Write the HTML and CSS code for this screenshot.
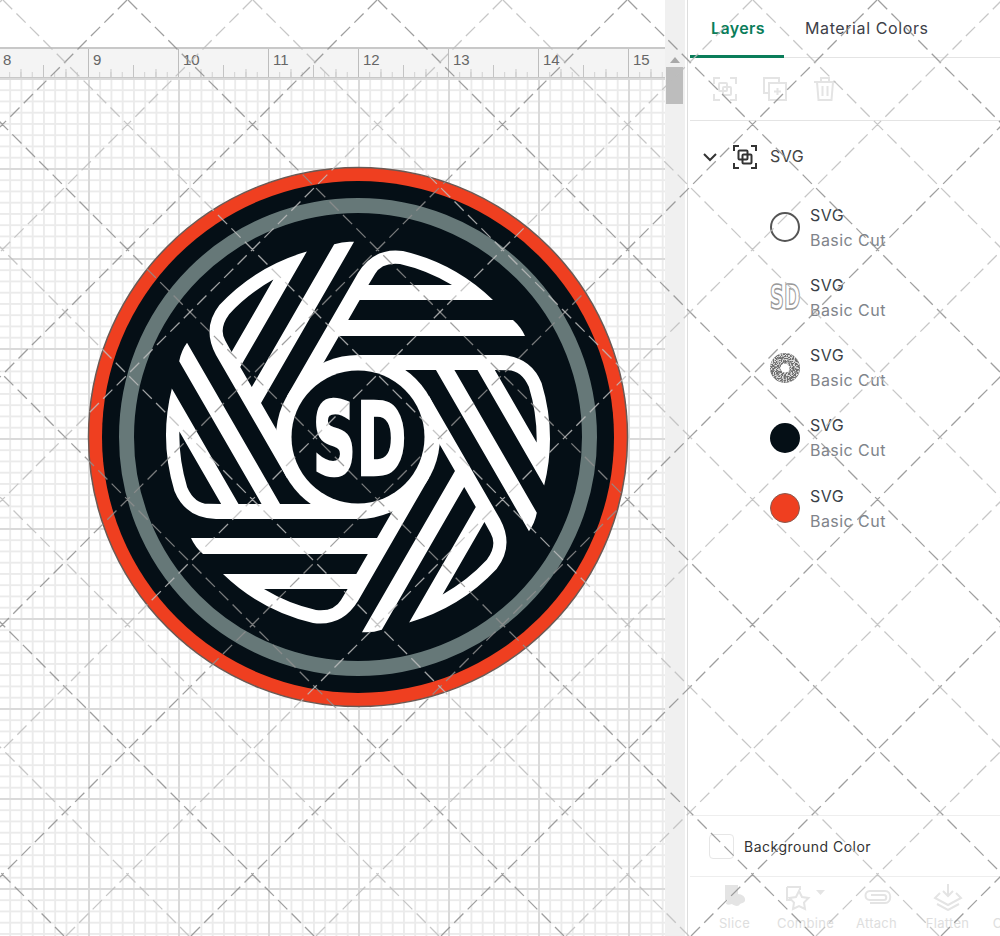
FILE: index.html
```html
<!DOCTYPE html>
<html lang="en">
<head>
<meta charset="utf-8">
<title>Layers</title>
<link rel="stylesheet" href="styles.css">
</head>
<body>
<svg width="0" height="0" class="defs">
  <defs>
    <g id="blade">
      <path fill-rule="evenodd" d="M-71,-41 L0,-164 Q16,-190 45,-186 A192,192 0 0 1 135,-137 L1.7,-137 L-9.8,-117 L155,-117 Q163,-110 167,-101 L-19,-101 L-30,-82 L-58,-33.5 Z M10.4,-152 L17,-163 Q24,-175 42,-173 A177,177 0 0 1 94,-152 Z"/>
    </g>
    <g id="blades" class="blades">
      <use href="#blade"/>
      <use href="#blade" transform="rotate(60)"/>
      <use href="#blade" transform="rotate(120)"/>
      <use href="#blade" transform="rotate(180)"/>
      <use href="#blade" transform="rotate(240)"/>
      <use href="#blade" transform="rotate(300)"/>
    </g>
    <filter id="speckle" x="0" y="0" width="100%" height="100%">
      <feTurbulence type="fractalNoise" baseFrequency="0.9" numOctaves="2" seed="4"/>
      <feColorMatrix type="matrix" values="0 0 0 0 0.72  0 0 0 0 0.72  0 0 0 0 0.72  7 0 0 0 -3.2"/>
      <feComposite in2="SourceGraphic" operator="in"/>
    </filter>
  </defs>
</svg>
<div class="app">
  <main class="work">
    <div class="topbar"></div>
    <div class="ruler">
      <div class="ruler-cell">8</div>
      <div class="ruler-cell">9</div>
      <div class="ruler-cell">10</div>
      <div class="ruler-cell">11</div>
      <div class="ruler-cell">12</div>
      <div class="ruler-cell">13</div>
      <div class="ruler-cell">14</div>
      <div class="ruler-cell">15</div>
    </div>
    <div class="canvas">
      <svg class="logo" width="544" height="544" viewBox="-272 -272 544 544">
        <circle r="269.5" class="logo-red"/>
        <circle r="256" class="logo-dark"/>
        <circle r="231.5" class="logo-ring"/>
        <use href="#blades" class="logo-white"/>
        <circle r="82" class="logo-white"/>
        <circle r="66.5" class="logo-dark"/>
        <text class="logo-sd" transform="translate(1.5,37.500) scale(0.6,1)" text-anchor="middle">SD</text>
      </svg>
    </div>
  </main>
  <div class="scrollbar">
    <div class="scroll-arrow"></div>
    <div class="scroll-thumb"></div>
  </div>
  <aside class="panel">
    <nav class="tabs">
      <div class="tab tab-active">Layers</div>
      <div class="tab">Material Colors</div>
    </nav>
    <div class="tools">
      <svg class="tool" width="26" height="26" viewBox="0 0 26 26"><path d="M2 8V2h6M18 2h6v6M24 18v6h-6M8 24H2v-6"/><rect x="7" y="7" width="8" height="8" rx="1"/><rect x="11" y="11" width="8" height="8" rx="1"/></svg>
      <svg class="tool" width="26" height="26" viewBox="0 0 26 26"><path d="M17 7V2H2v15h5"/><rect x="7" y="7" width="17" height="17"/><path d="M15.500 12v7M12 15.500h7"/></svg>
      <svg class="tool" width="26" height="26" viewBox="0 0 26 26"><path d="M2 6h22M9 6V2h8v4M5 6l1.500 18h13L21 6M10.500 10v10M15.500 10v10"/></svg>
    </div>
    <div class="group-row">
      <svg class="chevron" width="16" height="10" viewBox="0 0 16 10"><path d="M2 2l6 6 6-6"/></svg>
      <svg class="group-icon" width="26" height="26" viewBox="0 0 26 26"><path d="M2 7V2h5M19 2h5v5M24 19v5h-5M7 24H2v-5"/><rect x="6.500" y="6.500" width="9" height="9" rx="1"/><rect x="10.500" y="10.500" width="9" height="9" rx="1"/></svg>
      <span class="group-label">SVG</span>
    </div>
    <ul class="layers">
      <li class="layer">
        <svg class="thumb" width="30" height="30" viewBox="0 0 30 30"><circle cx="15" cy="15" r="14" class="thumb-ring"/></svg>
        <div class="layer-text"><div class="layer-name">SVG</div><div class="layer-op">Basic Cut</div></div>
      </li>
      <li class="layer">
        <svg class="thumb" width="30" height="30" viewBox="0 0 30 30"><text class="thumb-sd" transform="translate(15,27) scale(0.58,1)" text-anchor="middle">SD</text></svg>
        <div class="layer-text"><div class="layer-name">SVG</div><div class="layer-op">Basic Cut</div></div>
      </li>
      <li class="layer">
        <svg class="thumb" width="30" height="30" viewBox="0 0 30 30"><circle cx="15" cy="15" r="15" class="thumb-base"/><circle cx="15" cy="15" r="15" filter="url(#speckle)"/><circle cx="15" cy="15" r="4.500" class="thumb-hole"/></svg>
        <div class="layer-text"><div class="layer-name">SVG</div><div class="layer-op">Basic Cut</div></div>
      </li>
      <li class="layer">
        <svg class="thumb" width="30" height="30" viewBox="0 0 30 30"><circle cx="15" cy="15" r="15" class="thumb-dark"/></svg>
        <div class="layer-text"><div class="layer-name">SVG</div><div class="layer-op">Basic Cut</div></div>
      </li>
      <li class="layer">
        <svg class="thumb" width="30" height="30" viewBox="0 0 30 30"><circle cx="15" cy="15" r="14.500" class="thumb-red"/></svg>
        <div class="layer-text"><div class="layer-name">SVG</div><div class="layer-op">Basic Cut</div></div>
      </li>
    </ul>
    <div class="bg-row">
      <span class="checkbox"></span>
      <span class="bg-label">Background Color</span>
    </div>
    <div class="actions">
      <div class="action">
        <svg class="action-icon" width="30" height="28" viewBox="0 0 30 28"><path class="fill" d="M5 2h13v9c4 0 8 3 7 7-1 2-4 2-5 3-1 3-6 2-8 0-3 1-6 1-6-1l2-3H5z"/></svg>
        <span>Slice</span>
      </div>
      <div class="action action-combine">
        <svg class="action-icon" width="46" height="28" viewBox="0 0 46 28"><path d="M4 4h13v3M8 17H4V4"/><path d="M16 8l3 6 6.500 1-4.500 4.500 1 6.500-6-3-6 3 1-6.500L6.500 15l6.500-1z"/><path class="fill" d="M33 7h9l-4.500 5z"/></svg>
        <span>Combine</span>
      </div>
      <div class="action">
        <svg class="action-icon" width="30" height="28" viewBox="0 0 30 28"><path d="M8 20h15c7 0 7-12 0-12H8c-6 0-6 9 0 9h14c3 0 3-5 0-5H9"/></svg>
        <span>Attach</span>
      </div>
      <div class="action">
        <svg class="action-icon" width="30" height="28" viewBox="0 0 30 28"><path d="M15 1v12M10 8l5 5 5-5M7 10l-5 5 13 7 13-7-5-5M4 21l11 6 11-6"/></svg>
        <span>Flatten</span>
      </div>
      <div class="action action-cut">
        <svg class="action-icon" width="30" height="28" viewBox="0 0 30 28"><circle cx="15" cy="14" r="10"/></svg>
        <span>Contour</span>
      </div>
    </div>
  </aside>
</div>
<svg class="watermark" width="1000" height="936" viewBox="0 0 1000 936">
  <path class="wm-dark" d="M127 0L0 127M377 0L0 377M627 0L0 627M877 0L0 877M1127 0L191 936M1377 0L441 936M1627 0L691 936M1877 0L941 936M-872 0L64 936M-622 0L314 936M-372 0L564 936M-122 0L814 936M128 0L1064 936M378 0L1314 936M628 0L1564 936M878 0L1814 936"/>
  <path class="wm-light" d="M2 0L0 2M252 0L0 252M502 0L0 502M752 0L0 752M1002 0L66 936M1252 0L316 936M1502 0L566 936M1752 0L816 936M-747 0L189 936M-497 0L439 936M-247 0L689 936M3 0L939 936M253 0L1189 936M503 0L1439 936M753 0L1689 936"/>
</svg>
</body>
</html>
```

FILE: styles.css
```css
* { box-sizing: border-box; }
html, body { margin: 0; padding: 0; height: 100%; }
body { background: #fff; font-family: "Inter", "Liberation Sans", sans-serif; color: #333; overflow: hidden; }
.defs { position: absolute; }
.app { display: flex; width: 1000px; height: 936px; }

.work { width: 665px; display: flex; flex-direction: column; flex: none; overflow: hidden; }
.topbar { height: 49px; flex: none; background: #fff; border-bottom: 2px solid #c8c8c8; }
.ruler {
  height: 29px; flex: none; display: flex; margin-left: -2px; overflow: hidden; width: 670px;
  background-color: #f4f4f4;
  border-bottom: 1px solid #c8c8c8;
  background-image:
    linear-gradient(90deg, #c4c4c4 1px, transparent 1px),
    linear-gradient(90deg, #c8c8c8 1px, transparent 1px),
    linear-gradient(90deg, #cfcfcf 1px, transparent 1px);
  background-size: 45px 12px, 22.5px 8px, 11.25px 5px;
  background-repeat: repeat-x;
  background-position: 0 bottom, 0 bottom, 0 bottom;
}
.ruler-cell {
  width: 90px; flex: none; padding: 2px 0 0 5px; font-size: 15px; line-height: 17px; color: #666;
  background: linear-gradient(#bdbdbd, #bdbdbd) 0 0 / 1px 100% no-repeat;
  font-family: "Liberation Sans", sans-serif;
}
.canvas {
  flex: 1; position: relative; background-color: #fff;
  background-image:
    linear-gradient(90deg, #dadada 2px, transparent 2px),
    linear-gradient(#dadada 2px, transparent 2px),
    linear-gradient(90deg, #ebebeb 1.500px, transparent 1.500px),
    linear-gradient(#ebebeb 1.500px, transparent 1.500px);
  background-size: 90px 90px, 90px 90px, 11.25px 11.25px, 11.25px 11.25px;
  background-position: -2px 0, 0 0, -2px 0, 0 0;
}
.logo { position: absolute; left: 86px; top: 87px; }
.logo-red { fill: #ef3f20; stroke: #6a5a55; stroke-width: 1.5; }
.logo-dark { fill: #050f16; }
.logo-ring { fill: none; stroke: #667878; stroke-width: 15; }
.logo-white { fill: #fff; }
.logo-sd { fill: #fff; stroke: #fff; stroke-width: 2.5px; font: bold 101px "DejaVu Sans", sans-serif; }

.scrollbar { width: 22px; flex: none; background: #f0f0f0; border-right: 2px solid #fff; padding-top: 48px; }
.scroll-arrow { width: 0; height: 0; margin: 9px auto 4px; border: 5px solid transparent; border-top: 0; border-bottom: 6px solid #a8a8a8; }
.scroll-thumb { width: 17px; height: 37px; margin: 0 auto 0 1px; background: #bdbdbd; }

.panel { flex: 1; border-left: 1px solid #ddd; display: flex; flex-direction: column; padding-left: 2px; min-width: 0; }
.tabs { display: flex; height: 58px; flex: none; border-bottom: 1px solid #e4e4e4; }
.tab { font-size: 16px; line-height: 56px; color: #3c4048; padding: 0 21px; white-space: nowrap; height: 58px; letter-spacing: .6px; }
.tab-active { color: #0a7d5a; font-weight: 600; width: 94px; border-bottom: 3px solid #0a7d5a; letter-spacing: .35px; }

.tools { height: 63px; flex: none; display: flex; align-items: center; gap: 24px; padding-left: 22px; border-bottom: 1px solid #e4e4e4; }
.tool { fill: none; stroke: #e4e4e4; stroke-width: 2; }

.group-row { height: 71px; flex: none; display: flex; align-items: center; padding-left: 12px; }
.chevron { fill: none; stroke: #333; stroke-width: 2; }
.group-icon { fill: none; stroke: #333; stroke-width: 2; margin-left: 14px; }
.group-label { font-size: 16px; margin: 0 0 2px 12px; color: #444; letter-spacing: .5px; }

.layers { list-style: none; margin: 0; padding: 0 0 0 80px; flex: 1; }
.layer { height: 70.25px; display: flex; align-items: flex-start; }
.thumb { flex: none; margin-top: 20px; margin-right: 10px; overflow: visible; }
.layer-text { margin-top: 10.5px; }
.layer-name { font-size: 16px; line-height: 25px; color: #3a3f47; letter-spacing: .5px; }
.layer-op { font-size: 16px; line-height: 25px; color: #80848a; letter-spacing: .45px; }
.thumb-ring { fill: #fff; stroke: #555; stroke-width: 2; }
.thumb-sd { fill: #fff; stroke: #999; stroke-width: 1.5px; font: bold 34px "DejaVu Sans", sans-serif; }
.thumb-base { fill: #6e6e6e; }
.thumb-hole { fill: #fff; }
.thumb-dark { fill: #050f16; }
.thumb-red { fill: #ef3f20; stroke: #8a5a50; stroke-width: 1; }

.bg-row { height: 61px; flex: none; display: flex; align-items: center; padding-left: 19px; border-top: 1px solid #eee; }
.checkbox { width: 25px; height: 25px; border: 1px solid #e6e6e6; border-radius: 4px; flex: none; }
.bg-label { font-size: 14px; margin-left: 10px; color: #333; letter-spacing: .5px; }

.actions { height: 60px; flex: none; display: flex; border-top: 1px solid #eee; padding-left: 9px; overflow: hidden; }
.action { width: 71px; flex: none; display: flex; flex-direction: column; align-items: center; padding-top: 6px; gap: 4px; font-size: 13px; color: #dedede; letter-spacing: .3px; }
.action-icon { fill: none; stroke: #e4e4e4; stroke-width: 2; flex: none; }
.action-icon .fill { fill: #e4e4e4; stroke: none; }

.watermark { position: absolute; left: 0; top: 0; pointer-events: none; fill: none; }
.wm-dark { stroke: #8e8e8e; stroke-width: 1.300; stroke-dasharray: 13 6; opacity: .85; }
.wm-light { stroke: #bdbdbd; stroke-width: 1.300; stroke-dasharray: 13 6; opacity: .85; }
```
